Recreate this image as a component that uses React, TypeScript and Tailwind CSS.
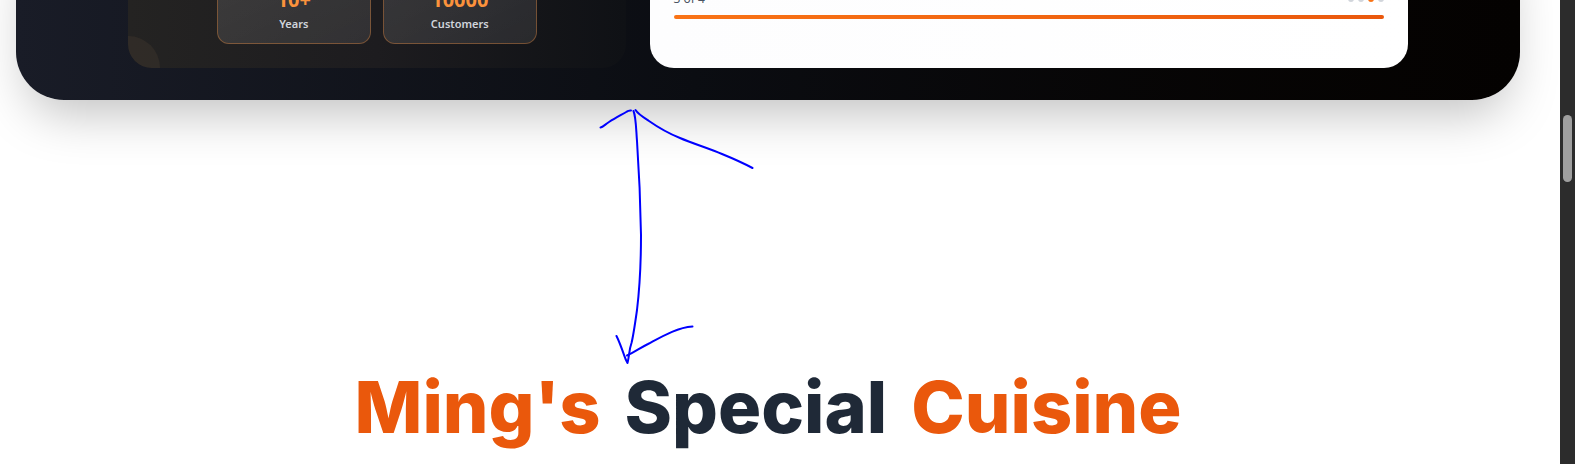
const stats = [
  { value: '10+', label: 'Years' },
  { value: '10000', label: 'Customers' },
];

const slides = [1, 2, 3, 4];
const currentSlide = 3;

function StatCard({ value, label }: { value: string; label: string }) {
  return (
    <div className="flex flex-col items-center gap-0.5 rounded-xl border border-[#fb923c]/35 bg-linear-to-br from-white/12 to-white/9 px-3 pt-3 pb-[11px] text-center">
      <dd className="text-xl leading-7 font-bold text-[#fb923c]">{value}</dd>
      <dt className="order-last text-[11px] leading-4 font-semibold text-[#d1d5db]">{label}</dt>
    </div>
  );
}

function IntroPanel() {
  return (
    <div className="relative col-span-2 flex flex-col items-center justify-end overflow-hidden rounded-3xl bg-linear-to-r from-[#242322] via-[#1d1c1f] to-[#0f1115] pb-6">
      <div className="absolute -bottom-8 -left-8 size-16 rounded-full bg-[#fdba74]/6" />
      <dl className="grid w-full max-w-xs grid-cols-2 gap-3">
        {stats.map((stat) => (
          <StatCard key={stat.label} {...stat} />
        ))}
      </dl>
    </div>
  );
}

function SliderCard() {
  return (
    <div className="col-span-3 flex flex-col justify-end rounded-3xl bg-linear-to-r from-[#fdfdfe] to-white px-6 pt-6 pb-[49px]">
      <div className="flex items-center justify-between">
        <p className="text-xs leading-4 text-[#4b5563]">
          {currentSlide} of {slides.length}
        </p>
        <div className="flex gap-1">
          {slides.map((slide) => (
            <span
              key={slide}
              className={
                slide === currentSlide
                  ? 'size-1.5 rounded-full bg-[#f97316]'
                  : 'size-1.5 rounded-full bg-[#d1d5db]'
              }
            />
          ))}
        </div>
      </div>
      <div className="mt-2 h-1 rounded-full bg-linear-to-r from-[#f97316] to-[#ea580c]" />
    </div>
  );
}

function Hero() {
  return (
    <section className="-mt-[65px] rounded-b-[48px] bg-linear-to-r from-[#191c27] via-[#0b0d12] via-45% to-[#040201] px-8 pb-8 shadow-2xl">
      <div className="mx-auto grid max-w-7xl grid-cols-5 gap-6 pt-8">
        <IntroPanel />
        <SliderCard />
      </div>
    </section>
  );
}

function SpacingArrow() {
  return (
    <svg
      className="pointer-events-none absolute top-[100px] left-[590px]"
      width="180"
      height="270"
      viewBox="590 100 180 270"
      fill="none"
      stroke="#0000ff"
      strokeWidth="2"
      strokeLinecap="round"
      strokeLinejoin="round"
      aria-hidden="true"
    >
      <path d="M600.5 127.500C603 127 605 124.500 609 122C616 117.500 622 114.500 627 111.500C628.500 110.700 629.500 110.700 631 110.500" />
      <path d="M633.500 111C636 117 636 128 637 141C639 170 640.500 205 641 235C641 262 640 285 637 310C635 324 633.500 335 631.500 343C629 350 629.500 355 627.500 363L625.500 359C623 352 620 343 616.500 336" />
      <path d="M635.500 110C638 114 643 117 649 121C659 128 670 134 680 138C694 144 708 148 722 154C733 158.500 744 163.500 752.500 168" />
      <path d="M627 355.500C634 352.500 640 348 648 344C662 336.500 677 327.500 692.500 326.500" />
    </svg>
  );
}

export default function App() {
  return (
    <div className="relative flex h-screen overflow-hidden bg-white font-['Noto_Sans',sans-serif]">
      <main className="min-w-0 flex-1 pr-10 pl-4">
        <Hero />
        <h2 className="mt-[271px] flex justify-center gap-6 font-['Inter',sans-serif] text-7xl leading-none font-extrabold text-[#ea580c]">
          <span>Ming's</span> <span className="text-[#1f2937]">Special</span> <span>Cuisine</span>
        </h2>
      </main>
      <div className="flex w-[15px] shrink-0 justify-center bg-[#2c2c2c] pt-[115px]">
        <div className="h-[67px] w-[9px] rounded-full bg-[#9f9f9f]" />
      </div>
      <SpacingArrow />
    </div>
  );
}
